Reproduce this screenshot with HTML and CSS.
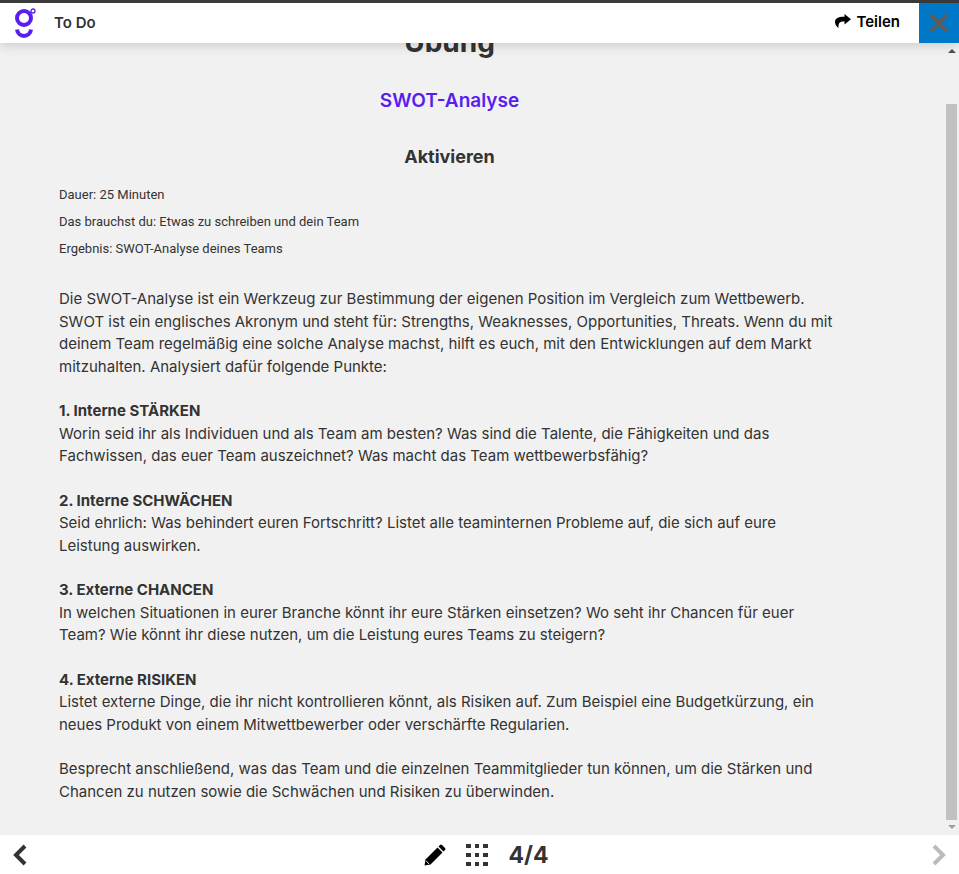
FILE: index.html
```html
<!DOCTYPE html>
<html lang="de">
<head>
<meta charset="utf-8">
<meta name="viewport" content="width=device-width, initial-scale=1">
<title>To Do</title>
<link rel="stylesheet" href="styles.css">
</head>
<body>
<header class="topbar">
  <svg class="logo" viewBox="0 0 24 32" aria-hidden="true">
    <circle cx="10" cy="11" r="7" fill="none" stroke="#5a1df0" stroke-width="4"/>
    <circle cx="19" cy="4" r="2" fill="none" stroke="#5a1df0" stroke-width="1.3"/>
    <path d="M3 22.500 C4 31 16 31 17 22.500" fill="none" stroke="#5a1df0" stroke-width="4"/>
  </svg>
  <span class="title">To Do</span>
  <button class="share" type="button">
    <svg viewBox="0 0 16 14" aria-hidden="true"><path d="M9.500 0 L16 5.300 L9.500 10.500 V7.500 C5 7.300 3.200 8.500 3.500 14 C1.500 12.500 0 10.500 0 8 C0 4 4 2.600 9.500 2.800 Z"/></svg>
    Teilen
  </button>
  <button class="close" type="button" aria-label="Schließen">
    <svg viewBox="0 0 18 18" aria-hidden="true"><path d="M2 2 L16 16 M16 2 L2 16"/></svg>
  </button>
</header>

<main class="stage">
  <article class="content">
    <h1>Übung</h1>
    <h2>SWOT-Analyse</h2>
    <h3>Aktivieren</h3>
    <ul class="facts">
      <li>Dauer: 25 Minuten</li>
      <li>Das brauchst du: Etwas zu schreiben und dein Team</li>
      <li>Ergebnis: SWOT-Analyse deines Teams</li>
    </ul>
    <div class="text">
      <p>Die SWOT-Analyse ist ein Werkzeug zur Bestimmung der eigenen Position im Vergleich zum Wettbewerb.<br>SWOT ist ein englisches Akronym und steht für: Strengths, Weaknesses, Opportunities, Threats. Wenn du mit<br>deinem Team regelmäßig eine solche Analyse machst, hilft es euch, mit den Entwicklungen auf dem Markt<br>mitzuhalten. Analysiert dafür folgende Punkte:</p>
      <p><strong>1. Interne STÄRKEN</strong><br>Worin seid ihr als Individuen und als Team am besten? Was sind die Talente, die Fähigkeiten und das<br>Fachwissen, das euer Team auszeichnet? Was macht das Team wettbewerbsfähig?</p>
      <p><strong>2. Interne SCHWÄCHEN</strong><br>Seid ehrlich: Was behindert euren Fortschritt? Listet alle teaminternen Probleme auf, die sich auf eure<br>Leistung auswirken.</p>
      <p><strong>3. Externe CHANCEN</strong><br>In welchen Situationen in eurer Branche könnt ihr eure Stärken einsetzen? Wo seht ihr Chancen für euer<br>Team? Wie könnt ihr diese nutzen, um die Leistung eures Teams zu steigern?</p>
      <p><strong>4. Externe RISIKEN</strong><br>Listet externe Dinge, die ihr nicht kontrollieren könnt, als Risiken auf. Zum Beispiel eine Budgetkürzung, ein<br>neues Produkt von einem Mitwettbewerber oder verschärfte Regularien.</p>
      <p>Besprecht anschließend, was das Team und die einzelnen Teammitglieder tun können, um die Stärken und<br>Chancen zu nutzen sowie die Schwächen und Risiken zu überwinden.</p>
    </div>
  </article>
  <div class="scrollbar" aria-hidden="true">
    <svg class="arrow" viewBox="0 0 8 4"><path d="M0 4 L4 0 L8 4 Z" fill="#505050"/></svg>
    <span class="thumb"></span>
    <svg class="arrow" viewBox="0 0 8 4"><path d="M0 0 L4 4 L8 0 Z" fill="#a0a0a0"/></svg>
  </div>
</main>

<footer class="bottombar">
  <button type="button" aria-label="Zurück">
    <svg class="chevron" viewBox="0 0 14 22" aria-hidden="true"><path d="M12 2 L3 11 L12 20" stroke="#333"/></svg>
  </button>
  <div class="tools">
    <button type="button" aria-label="Notizen">
      <svg class="pencil" viewBox="0 0 22 22" aria-hidden="true"><path d="M0.500 21.500 L1.500 15.500 L13.500 3.500 L18.500 8.500 L6.500 20.500 Z"/><path d="M14.500 2.500 L16 1 Q17 0 18 1 L21 4 Q22 5 21 6 L19.500 7.500 Z"/><path d="M2.200 17 L5 19.800" stroke="#fff" stroke-width="1"/></svg>
    </button>
    <button type="button" aria-label="Übersicht">
      <svg class="grid" viewBox="0 0 22 22" aria-hidden="true"><path d="M0 0h5v4H0z M9 0h4v4H9z M17 0h5v4h-5z M0 9h5v4H0z M9 9h4v4H9z M17 9h5v4h-5z M0 18h5v4H0z M9 18h4v4H9z M17 18h5v4h-5z" fill="#333"/></svg>
    </button>
    <span class="pages">4/4</span>
  </div>
  <button type="button" aria-label="Weiter" disabled>
    <svg class="chevron" viewBox="0 0 14 22" aria-hidden="true"><path d="M2 2 L11 11 L2 20" stroke="#bbb"/></svg>
  </button>
</footer>
</body>
</html>
```
FILE: styles.css
```css
* {
  box-sizing: border-box;
}

body {
  margin: 0;
  height: 100vh;
  display: flex;
  flex-direction: column;
  border-top: 3px solid #3a3a3a;
  background: #f1f1f1;
  color: #333;
  font-family: Inter, "Liberation Sans", sans-serif;
  font-size: 15px;
}

button {
  display: flex;
  align-items: center;
  padding: 0;
  border: 0;
  background: none;
  color: inherit;
  font: inherit;
}

svg {
  display: block;
}

.topbar {
  position: relative;
  z-index: 1;
  flex: none;
  display: flex;
  align-items: center;
  height: 40px;
  padding-left: 14px;
  background: #fff;
  box-shadow: 0 1px 12px rgba(0, 0, 0, 0.2);
}

.logo {
  width: 24px;
  height: 32px;
}

.title {
  margin-left: 16px;
  padding-bottom: 2px;
  font-weight: 600;
}

.share {
  gap: 6px;
  margin-left: auto;
  margin-right: 19px;
  padding-bottom: 4px;
  color: #000;
  font-weight: 600;
}

.share svg {
  width: 16px;
  height: 16px;
}

.close {
  justify-content: center;
  width: 40px;
  height: 40px;
  background: #0078c8;
}

.close svg {
  width: 18px;
  height: 18px;
  fill: none;
  stroke: #5c5c5c;
  stroke-width: 4;
  stroke-linecap: round;
}

.stage {
  flex: 1;
  min-height: 0;
  display: flex;
  overflow: hidden;
}

.content {
  flex: 1;
  padding: 0 106px 0 59px;
}

h1,
h2,
h3 {
  margin: 0;
  text-align: center;
  font-weight: 700;
}

h1 {
  margin-top: -21px;
  font-size: 28px;
  line-height: 40px;
}

h2 {
  margin-top: 25px;
  color: #5a1df0;
  font-size: 19px;
  font-weight: 600;
  line-height: 28px;
}

h3 {
  margin-top: 28px;
  font-size: 18px;
  line-height: 28px;
}

.facts {
  margin: 10px 0 26px;
  padding: 0;
  list-style: none;
  font-family: Roboto, "Liberation Sans", sans-serif;
  font-size: 13px;
  line-height: 27px;
}

.text {
  line-height: 1.5;
  white-space: nowrap;
}

.text p {
  margin: 0 0 22px;
}

strong {
  font-weight: 700;
}

.scrollbar {
  flex: none;
  display: flex;
  flex-direction: column;
  align-items: center;
  width: 13px;
  padding: 6px 2px 6px 0;
}

.arrow {
  width: 8px;
  height: 4px;
}

.thumb {
  flex: 1;
  width: 11px;
  margin: 51px 0 5px;
  background: #c1c1c1;
}

.bottombar {
  flex: none;
  display: flex;
  align-items: center;
  justify-content: space-between;
  height: 39px;
  padding: 0 13px;
  background: #fff;
}

.chevron {
  width: 14px;
  height: 22px;
  fill: none;
  stroke-width: 4;
}

.tools {
  display: flex;
  align-items: center;
  gap: 20px;
  margin-left: 14px;
}

.pencil,
.grid {
  width: 22px;
  height: 22px;
}

.pages {
  font-size: 23px;
  font-weight: 700;
}
```
